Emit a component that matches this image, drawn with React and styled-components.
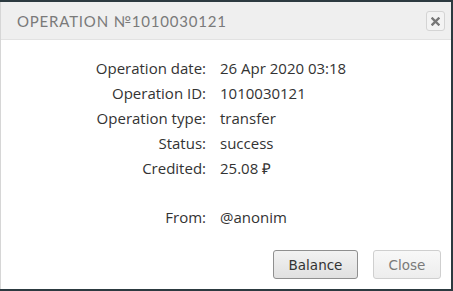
import React from "react";
import styled, { createGlobalStyle } from "styled-components";

const Global = createGlobalStyle`
  html, body { margin: 0; padding: 0; background: #2c3a40; }
  body { width: 453px; height: 291px; overflow: hidden; }
`;

const Dialog = styled.div`
  margin-top: 2px;
  width: 451px;
  height: 287px;
  box-sizing: border-box;
  background: #ffffff;
  border-left: 1px solid #d6d6d6;
  display: flex;
  flex-direction: column;
  font-family: Lato, "Noto Sans", sans-serif;
`;

const Header = styled.div`
  height: 38px;
  box-sizing: border-box;
  background: #efefef;
  border-bottom: 1px solid #e2e2e2;
  display: flex;
  align-items: center;
  justify-content: space-between;
  padding: 0 6px 0 16px;
`;

const Title = styled.div`
  font-family: Lato, "Noto Sans", sans-serif;
  font-size: 15px;
  letter-spacing: 0.8px;
  color: #7a7a7a;
  text-transform: uppercase;
  padding-top: 1px;
`;

const CloseX = styled.button`
  width: 19px;
  height: 20px;
  box-sizing: border-box;
  border: 1px solid #d4d4d4;
  border-radius: 3px;
  background: #f3f3f3;
  padding: 0;
  display: flex;
  align-items: center;
  justify-content: center;
  margin-top: 1px;
`;

const Body = styled.div`
  flex: 1;
  padding-top: 16px;
  display: grid;
  grid-template-columns: 205px 1fr;
  column-gap: 14px;
  align-content: start;
  font-family: "Open Sans", Lato, sans-serif;
  font-size: 15px;
  color: #333;
`;

const Label = styled.div`
  text-align: right;
  line-height: 25px;
  margin-top: ${(p) => (p.$gap ? "24px" : "0")};
`;

const Value = styled.div`
  line-height: 25px;
  margin-top: ${(p) => (p.$gap ? "24px" : "0")};
`;

const Footer = styled.div`
  display: flex;
  justify-content: flex-end;
  gap: 15px;
  padding: 0 10px 10px 0;
`;

const Button = styled.button`
  height: 29px;
  box-sizing: border-box;
  padding: 0;
  font-family: "DejaVu Sans", Verdana, sans-serif;
  font-size: 13.5px;
  border-radius: 3px;
  border: 1px solid ${(p) => (p.$primary ? "#8f8f8f" : "#cfcfcf")};
  color: ${(p) => (p.$primary ? "#333" : "#7a7a7a")};
  background: ${(p) =>
    p.$primary
      ? "linear-gradient(#f2f2f2, #e0e0e0)"
      : "linear-gradient(#f8f8f8, #ededed)"};
  width: ${(p) => p.$w}px;
`;

const rows = [
  ["Operation date:", "26 Apr 2020 03:18"],
  ["Operation ID:", "1010030121"],
  ["Operation type:", "transfer"],
  ["Status:", "success"],
  ["Credited:", "25.08 ₽"],
];

export default function App() {
  return (
    <>
      <Global />
      <Dialog>
        <Header>
          <Title>Operation №1010030121</Title>
          <CloseX aria-label="close">
            <svg width="9" height="9" viewBox="0 0 9 9">
              <path d="M1.5 1.5L7.5 7.5M7.5 1.5L1.5 7.5" stroke="#777" strokeWidth="2.4" strokeLinecap="square" />
            </svg>
          </CloseX>
        </Header>
        <Body>
          {rows.map(([l, v]) => (
            <React.Fragment key={l}>
              <Label>{l}</Label>
              <Value>{v}</Value>
            </React.Fragment>
          ))}
          <Label $gap>From:</Label>
          <Value $gap>@anonim</Value>
        </Body>
        <Footer>
          <Button $primary $w={85}>Balance</Button>
          <Button $w={68}>Close</Button>
        </Footer>
      </Dialog>
    </>
  );
}
